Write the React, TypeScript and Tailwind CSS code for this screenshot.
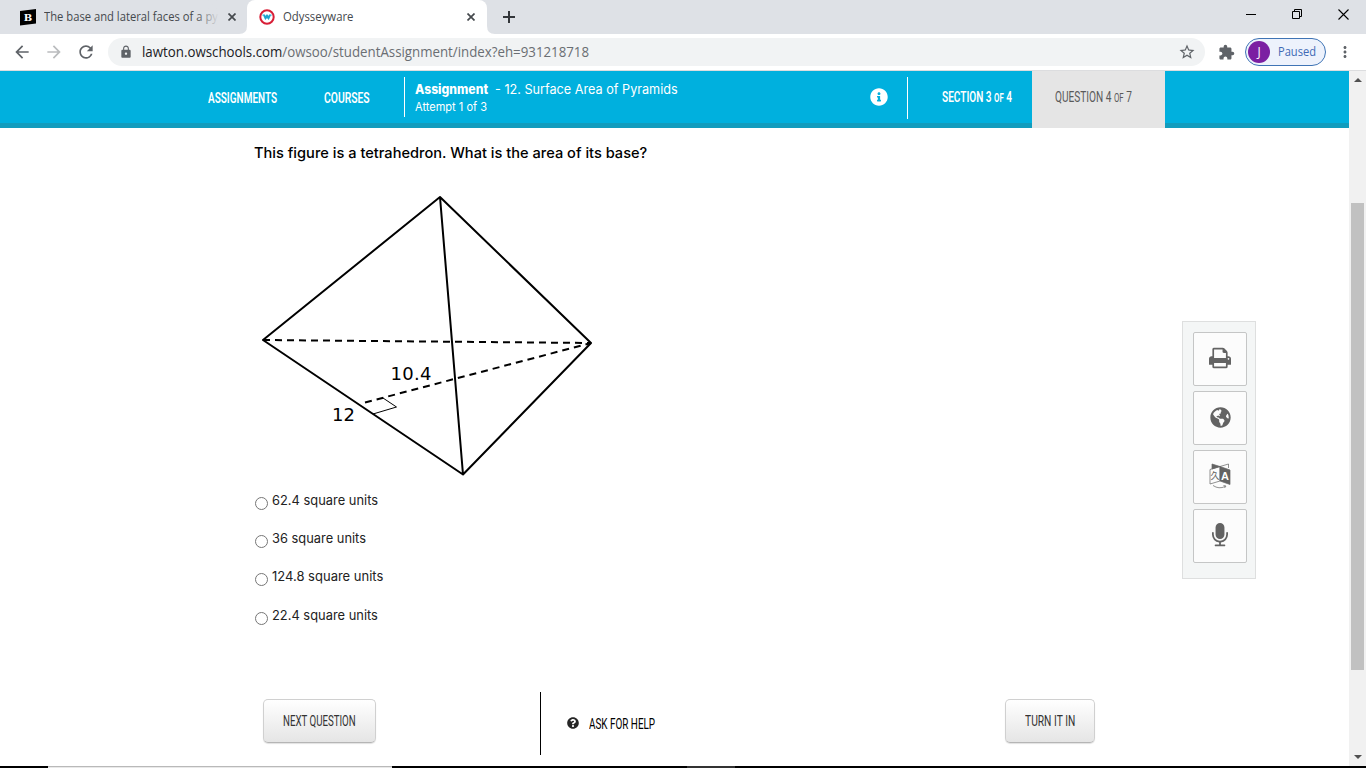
import React, { useLayoutEffect, useRef, useState } from 'react';
import { FaGlobeAmericas, FaInfoCircle, FaQuestionCircle } from 'react-icons/fa';
import { MdArrowBack, MdArrowForward, MdExtension, MdLock, MdMoreVert, MdRefresh, MdStarBorder } from 'react-icons/md';

interface FitTextProps {
  width: number;
  className?: string;
  children: React.ReactNode;
}

// Condenses or widens a single line of text to the given width
const FitText: React.FC<FitTextProps> = ({ width, className = '', children }) => {
  const ref = useRef<HTMLSpanElement>(null);
  const [scale, setScale] = useState(1);

  useLayoutEffect(() => {
    if (ref.current) {
      setScale(width / ref.current.offsetWidth);
    }
  }, [width]);

  return (
    <span className={`block shrink-0 ${className}`} style={{ width }}>
      <span
        ref={ref}
        className="inline-block whitespace-nowrap origin-left align-top"
        style={{ transform: `scaleX(${scale})` }}
      >
        {children}
      </span>
    </span>
  );
};

const answers = [
  { label: '62.4 square units', width: 106 },
  { label: '36 square units', width: 94 },
  { label: '124.8 square units', width: 111 },
  { label: '22.4 square units', width: 106 },
];

const CloseIcon = ({ className = '' }: { className?: string }) => (
  <svg className={`shrink-0 ${className}`} width="8" height="8" viewBox="0 0 8 8" stroke="currentColor" strokeWidth="1.7">
    <path d="M0.5 0.5l7 7M7.5 0.5l-7 7" />
  </svg>
);

const TabStrip = () => (
  <div className="h-[34px] flex bg-[#dee1e6] text-[#45494d] text-[12px] leading-[34px] font-['Open_Sans',sans-serif]">
    <div className="w-[247px] flex items-center pl-5 shrink-0">
      <svg width="16" height="17" viewBox="0 0 16 17" className="shrink-0">
        <path d="M0 2L16 0V14.5L0 16.5Z" fill="#000" />
        <text x="8" y="12" textAnchor="middle" fontSize="10" fontWeight="bold" fontFamily="DejaVu Serif, serif" fill="#fff">B</text>
      </svg>
      <div className="relative ml-2 w-[175px] overflow-hidden">
        <FitText width={174}>The base and lateral faces of a py</FitText>
        <div className="absolute inset-y-0 right-0 w-6 bg-gradient-to-r from-transparent to-[#dee1e6]" />
      </div>
      <CloseIcon className="ml-[9px]" />
    </div>
    <div className="relative w-60 bg-white rounded-t-lg flex items-center pl-3 shrink-0">
      <svg className="absolute -left-2 bottom-0" width="8" height="8"><path d="M8 0V8H0Q8 8 8 0" fill="#fff" /></svg>
      <svg className="absolute -right-2 bottom-0" width="8" height="8"><path d="M0 0V8H8Q0 8 0 0" fill="#fff" /></svg>
      <svg width="16" height="16" viewBox="0 0 16 16" fill="none">
        <circle cx="8" cy="8" r="6.7" stroke="#d81e36" strokeWidth="2" />
        <path d="M3.5 6.2h2l1 2 1.5-2 1.5 2 1-2h2M5 6.8l1.4 3L8 8l1.6 1.8 1.4-3" stroke="#20a4cf" strokeWidth="1.3" />
      </svg>
      <FitText width={70} className="ml-2">Odysseyware</FitText>
      <CloseIcon className="ml-[114px]" />
    </div>
    <div className="flex-1 flex items-center pl-4">
      <svg width="12" height="12" stroke="#33363a" strokeWidth="2"><path d="M6 0v12M0 6h12" /></svg>
    </div>
    <div className="flex items-center pb-[5px] pr-[17px] text-black">
      <svg width="10" height="11" stroke="currentColor"><path d="M0 5.5h10" /></svg>
      <svg className="ml-[36px]" width="10" height="11" fill="none" stroke="currentColor"><path d="M0.5 2.5h7v7h-7zM2.5 2.5v-2h7v7h-2" /></svg>
      <svg className="ml-[36px]" width="11" height="11" stroke="currentColor" strokeWidth="1.1"><path d="M0.5 0.5l10 10M10.5 0.5l-10 10" /></svg>
    </div>
  </div>
);

const AddressBar = () => (
  <div className="h-[37px] flex items-center bg-white border-b border-[#dcdddf] pl-[12px] text-[#5f6368] font-['Open_Sans',sans-serif]">
    <MdArrowBack size={20} />
    <MdArrowForward size={20} className="ml-[12px] text-[#babcbe]" />
    <MdRefresh size={20} className="ml-[12px]" />
    <div className="ml-3 w-[1097px] h-7 rounded-full bg-[#f1f3f4] flex items-center pl-[11px] text-[14px] leading-7">
      <MdLock size={14} />
      <FitText width={447} className="ml-[9px] text-[#6a6e73]">
        <span className="text-[#202124]">lawton.owschools.com</span>/owsoo/studentAssignment/index?eh=931218718
      </FitText>
      <MdStarBorder size={18} className="ml-[589px]" />
    </div>
    <MdExtension size={17} className="ml-[13px] shrink-0" />
    <div className="ml-[10px] w-[81px] h-7 rounded-full border border-[#3f74b5] bg-[#edf2fc] flex items-center pl-[2px] shrink-0">
      <div className="w-[22px] h-[22px] rounded-full bg-[#7b1fa2] text-white text-[12px] leading-[22px] text-center">J</div>
      <FitText width={38} className="ml-2 text-[12px] text-[#4069b5]">Paused</FitText>
    </div>
    <MdMoreVert size={18} className="ml-[10px] shrink-0" />
  </div>
);

const Header = () => (
  <header className="h-[57px] flex bg-[#00b0de] border-b-[5px] border-[#119cbd] text-white pl-[208px] font-['Roboto',sans-serif]">
    <nav className="flex pt-[17px] text-[15.5px] leading-5 font-semibold">
      <FitText width={69}>ASSIGNMENTS</FitText>
      <FitText width={46} className="ml-[47px]">COURSES</FitText>
    </nav>
    <div className="ml-[34px] mt-1.5 w-px h-10 bg-white" />
    <div className="ml-[10px] pt-[10px] w-[455px] font-['Inter',sans-serif]">
      <div className="flex text-[13px] leading-[17px]">
        <FitText width={73} className="font-extrabold">Assignment</FitText>
        <FitText width={183} className="ml-[7px]">- 12. Surface Area of Pyramids</FitText>
      </div>
      <FitText width={72} className="text-[11.5px] leading-[18px]">Attempt 1 of 3</FitText>
    </div>
    <FaInfoCircle size={18} className="mt-[17px] shrink-0" />
    <div className="ml-[19px] mt-1.5 w-px h-[42px] bg-white" />
    <FitText width={70} className="ml-[34px] pt-4 text-[15.5px] leading-5 font-semibold">
      SECTION 3 <span className="text-[12px]">OF</span> 4
    </FitText>
    <div className="ml-5 w-[133px] h-[57px] bg-[#e5e5e5] text-[#5a5a5a] pl-[23px] pt-4 text-[15.5px] leading-5">
      <FitText width={77}>
        QUESTION 4 <span className="text-[12px]">OF</span> 7
      </FitText>
    </div>
  </header>
);

const Tetrahedron = () => (
  <svg className="block" width="360" height="300" viewBox="245 185 360 300" fill="none" stroke="#000" strokeWidth="2">
    <path d="M440 197L263 340L463 474.500L591 343ZL463 474.500" strokeLinejoin="round" />
    <path d="M263 340L591 343" strokeDasharray="7 5" />
    <path d="M365 402.5L591 343" strokeDasharray="7 5" />
    <path d="M383 398L396.500 407L373 414" strokeWidth="1" />
    <g fill="#000" stroke="none" fontSize="18" fontFamily="DejaVu Sans, sans-serif">
      <text x="390.500" y="380" textLength="41">10.4</text>
      <text x="332" y="420.500" textLength="23">12</text>
    </g>
  </svg>
);

const PrintIcon = () => (
  <svg width="22" height="24" viewBox="0 0 1664 1792" fill="currentColor">
    <path d="M384 1536h896v-256h-896v256zm0-640h896v-384h-160q-40 0-68-28t-28-68v-160h-640v640zm1152 64q0-26-19-45t-45-19-45 19-19 45 19 45 45 19 45-19 19-45zm128 0v416q0 13-9.5 22.5t-22.5 9.5h-224v160q0 40-28 68t-68 28h-960q-40 0-68-28t-28-68v-160h-224q-13 0-22.5-9.5t-9.5-22.5v-416q0-79 56.5-135.5t135.5-56.5h64v-544q0-40 28-68t68-28h672q40 0 88 20t76 48l152 152q28 28 48 76t20 88v256h64q79 0 135.5 56.5t56.5 135.5z" />
  </svg>
);

const TranslateIcon = () => (
  <svg width="22" height="26" viewBox="0 0 22 26" fill="none" stroke="currentColor" strokeWidth="0.7">
    <path d="M1 6.500L11 3.500V18L1 21Z" />
    <path d="M11 3.500L19.500 1V5" />
    <path d="M3 1L11 3.500L3 6Z" fill="currentColor" />
    <path d="M11 3.500L21 7V21.500L11 18Z" fill="currentColor" />
    <path d="M4 22.500Q10 26.500 16 23.500M14.500 22.500L17 23L15.500 25" />
    <g stroke="none" fontWeight="bold">
      <text x="1.500" y="15.500" fontSize="9" fontFamily="Noto Sans CJK JP, sans-serif" fontWeight="normal" fill="currentColor">久</text>
      <text x="12" y="17" fontSize="11" fontFamily="Liberation Sans, sans-serif" fill="#fff">A</text>
    </g>
  </svg>
);

const MicIcon = () => (
  <svg width="16" height="25" viewBox="0 0 1152 1792" fill="currentColor">
    <path d="M1152 704v128q0 221-147.5 384.5t-364.5 187.5v132h256q26 0 45 19t19 45-19 45-45 19h-640q-26 0-45-19t-19-45 19-45 45-19h256v-132q-217-24-364.5-187.5t-147.5-384.5v-128q0-26 19-45t45-19 45 19 19 45v128q0 185 131.5 316.5t316.5 131.5 316.5-131.5 131.5-316.5v-128q0-26 19-45t45-19 45 19 19 45zm-256-384v512q0 132-94 226t-226 94-226-94-94-226v-512q0-132 94-226t226-94 226 94 94 226z" />
  </svg>
);

const tools = [
  { name: 'print', icon: <PrintIcon /> },
  { name: 'web', icon: <FaGlobeAmericas size={21} /> },
  { name: 'translate', icon: <TranslateIcon /> },
  { name: 'record', icon: <MicIcon /> },
];

const ToolPanel = () => (
  <aside className="mt-[193px] w-[74px] h-[258px] shrink-0 border border-[#dedfdf] bg-[#f4f6f6] p-2.5 flex flex-col gap-[5px]">
    {tools.map((tool) => (
      <button key={tool.name} className="w-[54px] h-[54px] shrink-0 pb-[2px] border border-[#c5c6c6] rounded-[2px] bg-[#fcfcfc] text-[#636363] flex items-center justify-center">
        {tool.icon}
      </button>
    ))}
  </aside>
);

const buttonClass =
  'h-11 border border-[#d0d0d0] border-b-[#b5b5b5] rounded-[5px] bg-gradient-to-b from-white to-[#e5e5e5] shadow-[0_1px_1px_rgba(0,0,0,0.12)] text-[#333] text-left shrink-0';

const Scrollbar = () => (
  <div className="w-[17px] shrink-0 bg-[#f1f1f1] flex flex-col items-center text-[#505050]">
    <svg width="8" height="4" className="mt-[7px]" fill="currentColor"><path d="M4 0L8 4H0Z" /></svg>
    <div className="mt-[121px] w-[13px] h-[467px] bg-[#c1c1c1]" />
    <svg width="8" height="4" className="mt-[85px]" fill="currentColor"><path d="M0 0H8L4 4Z" /></svg>
  </div>
);

const App: React.FC = () => {
  const [selected, setSelected] = useState<number | null>(null);

  return (
    <div className="w-[1366px] h-[768px] overflow-hidden flex flex-col bg-white">
      <TabStrip />
      <AddressBar />
      <div className="h-[695px] flex">
        <div className="w-[1349px] flex flex-col">
          <Header />
          <div className="flex h-[564px]">
            <main className="w-[1182px] pl-[245px] pt-[15px] shrink-0 font-['Inter',sans-serif]">
              <FitText width={393} className="ml-[9px] text-[14.5px] leading-5 font-medium text-black">
                This figure is a tetrahedron. What is the area of its base?
              </FitText>
              <div className="mt-[22px]">
                <Tetrahedron />
              </div>
              <div className="ml-[10px] mt-[5px] flex flex-col text-[13px] text-[#222]">
                {answers.map((answer, index) => (
                  <label key={answer.label} className="h-[38.200px] flex items-start">
                    <input
                      type="radio"
                      name="answer"
                      checked={selected === index}
                      onChange={() => setSelected(index)}
                      className="mt-[7px] w-[13px] h-[13px] shrink-0"
                    />
                    <FitText width={answer.width} className="ml-[4px] leading-5">{answer.label}</FitText>
                  </label>
                ))}
              </div>
            </main>
            <ToolPanel />
          </div>
          <footer className="flex items-start pl-[263px] text-[15px] font-['Roboto',sans-serif]">
            <button className={`${buttonClass} w-[113px] mt-[7px] pl-[19px]`}>
              <FitText width={73}>NEXT QUESTION</FitText>
            </button>
            <div className="ml-[164px] w-px h-[63px] bg-black" />
            <FaQuestionCircle size={12} className="ml-[26px] mt-[25px] text-[#262626]" />
            <FitText width={66} className="ml-[10px] mt-[22px] leading-5 text-black">ASK FOR HELP</FitText>
            <button className={`${buttonClass} w-[90px] ml-[350px] mt-[7px] pl-[19px]`}>
              <FitText width={50}>TURN IT IN</FitText>
            </button>
          </footer>
        </div>
        <Scrollbar />
      </div>
      {/* Taskbar edge */}
      <div className="h-0.5 flex bg-black">
        <div className="ml-12 w-[344px] bg-[#e9e9e9] border-t border-[#b9b9b9]" />
        <div className="ml-[295px] w-12 bg-[#333]" />
      </div>
    </div>
  );
};

export default App;
